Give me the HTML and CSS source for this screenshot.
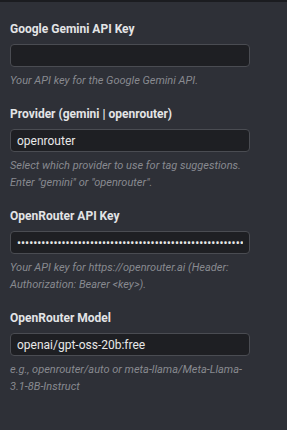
FILE: index.html
```html
<!DOCTYPE html>
<html>
  <head>
    <title>Settings</title>
    <link rel="stylesheet" href="styles.css">
  </head>
  <body>
    <div class="topbar"></div>
    <div class="settings">
      <div class="field">
        <label class="label" for="geminiKey">Google Gemini API Key</label>
        <input class="input" id="geminiKey" type="password" value="">
        <div class="help">Your API key for the Google Gemini API.</div>
      </div>
      <div class="field">
        <label class="label" for="provider">Provider (gemini | openrouter)</label>
        <input class="input" id="provider" type="text" value="openrouter">
        <div class="help">Select which provider to use for tag suggestions. Enter "gemini" or "openrouter".</div>
      </div>
      <div class="field">
        <label class="label" for="openrouterKey">OpenRouter API Key</label>
        <input class="input" id="openrouterKey" type="password" value="sk-or-v1-0000000000000000000000000000000000000000000000000000000000000000">
        <div class="help">Your API key for https://openrouter.ai (Header: Authorization: Bearer &lt;key&gt;).</div>
      </div>
      <div class="field">
        <label class="label" for="model">OpenRouter Model</label>
        <input class="input" id="model" type="text" value="openai/gpt-oss-20b:free">
        <div class="help">e.g., openrouter/auto or meta-llama/Meta-Llama-3.1-8B-Instruct</div>
      </div>
    </div>
  </body>
</html>
```

FILE: styles.css
```css
body {
  font-family: Roboto, "Noto Sans", sans-serif;
  margin: 0;
  background-color: #2e3037;
  min-height: 100vh;
}
.topbar {
  height: 2px;
  background-color: #1b1c20;
}
.settings {
  padding: 19px 38px 0 10px;
}
.field {
  margin-bottom: 17px;
}
.label {
  display: block;
  font-size: 12px;
  font-weight: bold;
  line-height: 16px;
  color: #e3e4e6;
  margin-bottom: 7px;
}
.input {
  display: block;
  box-sizing: border-box;
  width: 240px;
  height: 23px;
  margin: 0;
  padding: 0 6px;
  background-color: #1e1f23;
  border: 1px solid #4a4c52;
  border-radius: 4px;
  color: #e8e8e8;
  font-family: Roboto, "Noto Sans", sans-serif;
  font-size: 12px;
  outline: none;
}
.help {
  margin-top: 5px;
  font-size: 11px;
  font-style: italic;
  line-height: 17px;
  color: #888a90;
}
```
